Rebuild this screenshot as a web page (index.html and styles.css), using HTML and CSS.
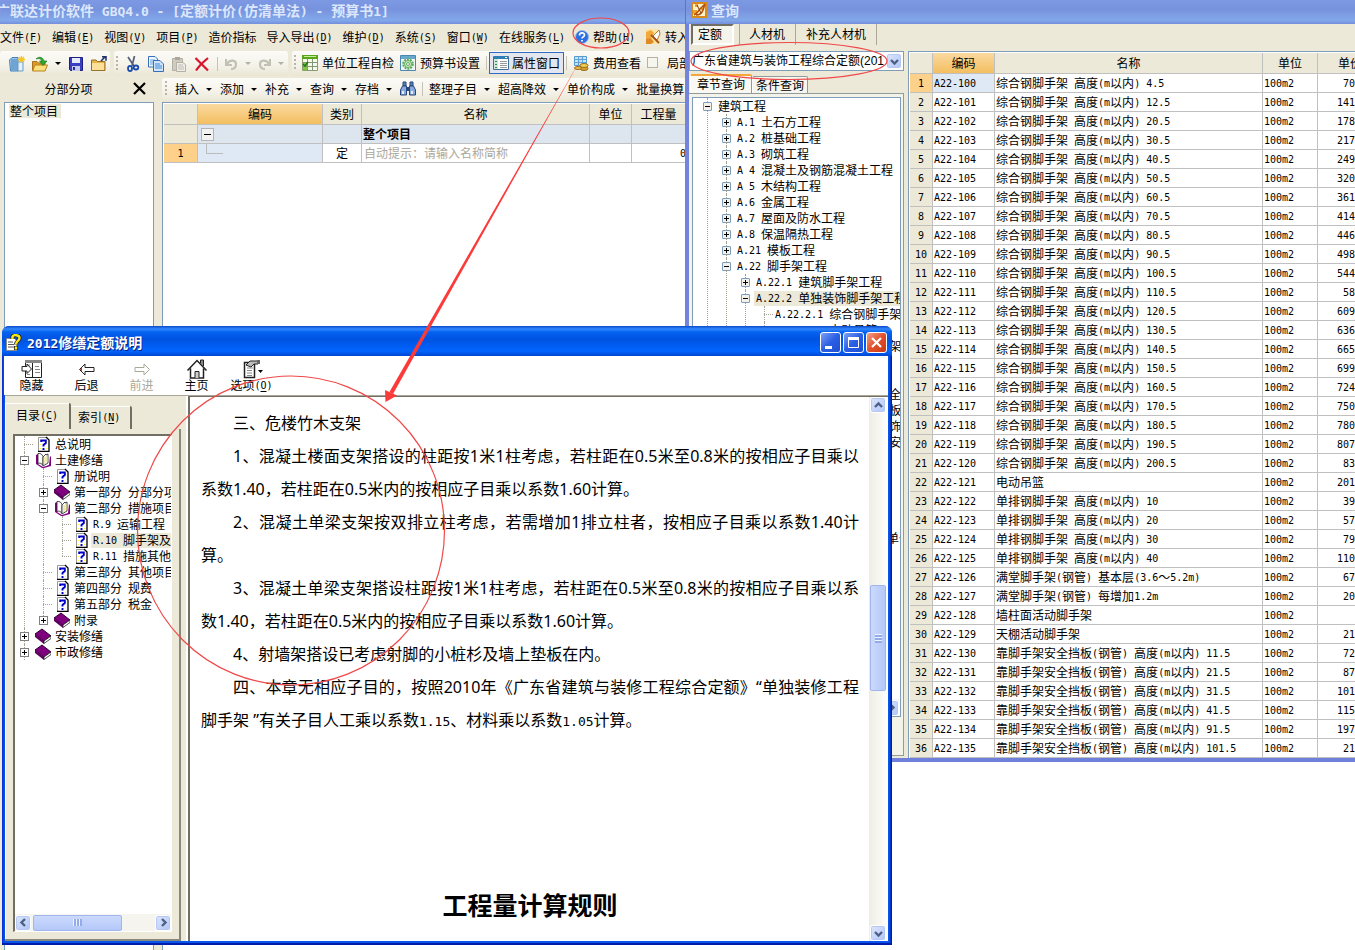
FILE: index.html
```html
<!DOCTYPE html>
<html lang="zh-CN">
<head>
<meta charset="utf-8">
<title>广联达计价软件 GBQ4.0</title>
<link rel="stylesheet" href="styles.css">
</head>
<body>
<svg class="defs" width="0" height="0" aria-hidden="true">
  <symbol id="i-topic" viewBox="0 0 16 16"><path d="M3 1h8l3 3v11H3z" fill="#fff"/><path d="M3.500 15V1.500H11" fill="none" stroke="#999"/><path d="M11 1l3 3v11.500H3" fill="none" stroke="#000" stroke-width="1.300"/><path d="M5 4h1v1H5zM5 8h1v1H5zM11 6h1v1h-1zM5 12h1v1H5zM11 12h1v1h-1z" fill="#ff3"/><path d="M6.200 6V4.500h4.600v2.600L8.500 9v1.500M8.500 12v2" fill="none" stroke="#00c" stroke-width="1.900"/></symbol>
  <symbol id="i-book" viewBox="0 0 16 16"><path d="M0 6l7-5 9 7-7 5z" fill="#800080" stroke="#300030"/><path d="M0 6v3l9 7v-3z" fill="#600060"/><path d="M9 13l7-5v2.500L9 15.500z" fill="#fff" stroke="#222" stroke-width=".8"/></symbol>
  <symbol id="i-open" viewBox="0 0 16 16"><path d="M1 3l2-1v10l5 3 6-2 1-9 1 1v9l-7 2H7l-6-4z" fill="#800080"/><path d="M3 1.500c3-.5 4 1 5 3v9c-1-2-3-3-5-2z" fill="#fff" stroke="#222" stroke-width=".8"/><path d="M8 5l3-3v1l2-1v9l-5 3z" fill="#fff" stroke="#222" stroke-width=".8"/><path d="M10 5v7M12 4v6" stroke="#e0d860"/></symbol>
  <symbol id="i-chev" viewBox="0 0 9 9"><path d="M1 3l3.500 3.500L8 3" fill="none" stroke="#4d6185" stroke-width="2.400"/></symbol>
  <symbol id="i-query" viewBox="0 0 16 16"><path d="M0 0h16v16H0z" fill="#d98a1c"/><path d="M2 2h12v12H2z" fill="#fff3c9"/><path d="M4 2h3v3H4zM10 6h3v2h-3zM2 8h4v4H2z" fill="#f3a32c"/><path d="M3 13c3-1 4-4 6-6l5-5-2 6c-1 3-4 5-7 5" fill="none" stroke="#b5520c" stroke-width="1.600"/><path d="M6 3l4 8" stroke="#7b3a10"/></symbol>
  <symbol id="i-settings" viewBox="0 0 16 16"><path d="M.5.500h15v15H.500z" fill="#eef6f8" stroke="#4a86ae"/><path d="M1 1h14v3H1z" fill="#68a8cc"/><circle cx="8" cy="9" r="4.800" fill="none" stroke="#5da95a" stroke-width="2" stroke-dasharray="2 1"/><circle cx="8" cy="9" r="3.500" fill="#d6f0c8" stroke="#5da95a"/><circle cx="8" cy="9" r="1.500" fill="#fff" stroke="#5da95a"/></symbol>
</svg>

<main class="desktop">

<section class="main-win">
  <header class="xp-title main-title"><h1>广联达计价软件 GBQ4.0 - [定额计价(仿清单法) - 预算书1]</h1></header>
  <nav class="menubar">
    <button>文件(<u>F</u>)</button><button>编辑(<u>E</u>)</button><button>视图(<u>V</u>)</button><button>项目(<u>P</u>)</button><button>造价指标</button><button>导入导出(<u>D</u>)</button><button>维护(<u>D</u>)</button><button>系统(<u>S</u>)</button><button>窗口(<u>W</u>)</button><button>在线服务(<u>L</u>)</button>
    <button class="with-icon"><svg width="14" height="14" viewBox="0 0 14 14"><circle cx="7" cy="7" r="6.500" fill="#2c6fe0" stroke="#9db8e8"/><path d="M4.500 5.500c0-3.500 5-3.500 5-.5 0 2-2.500 1.800-2.500 3.500M7 10v1.600" fill="none" stroke="#fff" stroke-width="1.700"/></svg><span>帮助(<u>H</u>)</span></button>
    <button class="with-icon"><svg width="16" height="16" viewBox="0 0 16 16"><path d="M1 0h9l5 2v13H1z" fill="#fbe3a0"/><path d="M1 3l5-2 3 3-3 5-5 2z" fill="#f2a93a"/><path d="M8 7l6-6 1 4-3 6z" fill="#fff" stroke="#b9772a"/><path d="M1 10l5-1 3 4-3 2H1z" fill="#e08a24"/><path d="M6 6l8 8" stroke="#a8501a" stroke-width="1.800"/></svg><span>转入</span></button>
  </nav>

  <div class="toolbars">
    <div class="strip files">
      <button aria-label="新建"><svg width="16" height="16" viewBox="0 0 16 16"><path d="M.5 4L3 1.500h6V15H1.500z" fill="#9cc8ee" stroke="#4780b8"/><path d="M3 3v11M5 3v11M7 3v11" stroke="#2f6ea8" stroke-width=".8"/><path d="M9 6h5v9H9z" fill="#e4f1fc" stroke="#6b99c4"/><path d="M12.500 0v7M9 3.500h7M10 1l5 5M15 1l-5 5" stroke="#f3c51e" stroke-width="1.300"/></svg></button>
      <button aria-label="打开"><svg width="16" height="16" viewBox="0 0 16 16"><path d="M.5 14V5.500H5L6.500 7H13v7z" fill="#d9992c" stroke="#a8721b"/><path d="M3 9h12.500L13 15H.500z" fill="#fce07d" stroke="#b8831f"/><path d="M4 3c3-3 7-2 8 2h3l-4 4.500L7.500 5H10C9 2.500 6.500 2 4 3z" fill="#2bab2b" stroke="#157015" stroke-width=".6"/></svg></button>
      <i class="drop"></i>
      <button aria-label="保存"><svg width="16" height="16" viewBox="0 0 16 16"><path d="M1.500 1.500h13v13h-12l-1-1z" fill="#3a3fc0" stroke="#1d2080"/><path d="M4 2h8v5H4z" fill="#e8ecfa"/><path d="M4 10h8v5H4z" fill="#c6cbe8"/><path d="M5 11h2v3H5z" fill="#25289a"/></svg></button>
      <button aria-label="关闭文件"><svg width="16" height="16" viewBox="0 0 16 16"><path d="M.5 14.500V4H5l1.500 1.500H14v9z" fill="#e5b44b" stroke="#97702a"/><path d="M1 7h12v7H1z" fill="#fbe09a"/><path d="M10 5l4-4M11 .800h4v4" fill="none" stroke="#24356e" stroke-width="1.600"/></svg></button>
    </div>
    <div class="strip edit">
      <span class="grip"></span>
      <button aria-label="剪切"><svg width="16" height="16" viewBox="0 0 16 16"><path d="M3 1l6 9M9.500 0L7 10" stroke="#555f78" stroke-width="1.700"/><ellipse cx="5" cy="12.500" rx="2" ry="2.600" fill="none" stroke="#1749ae" stroke-width="1.800"/><ellipse cx="11" cy="11.500" rx="2.300" ry="2" fill="none" stroke="#1749ae" stroke-width="1.800"/></svg></button>
      <button aria-label="复制"><svg width="16" height="16" viewBox="0 0 16 16"><path d="M.5.500H7L9.500 3v8h-9z" fill="#eef5fe" stroke="#3770b8"/><path d="M2 4h5M2 6h4M2 8h4" stroke="#5aa0e0"/><path d="M5.500 4.500H12L15.500 8v7.500h-10z" fill="#cfe4fb" stroke="#3770b8"/><path d="M7 8h5M7 10h7M7 12h7" stroke="#3a8bdc"/></svg></button>
      <button aria-label="粘贴"><svg width="16" height="16" viewBox="0 0 16 16"><path d="M1.500 2.500h10v12h-10z" fill="#cfccbf" stroke="#b3b0a4"/><path d="M4 1h5v3H4z" fill="#aaa79a"/><path d="M5.500 6.500H12l2.500 2v7h-9z" fill="#f0eee5" stroke="#b3b0a4"/><path d="M7 9h5M7 11h6M7 13h6" stroke="#bbb"/></svg></button>
      <button aria-label="删除"><svg width="16" height="16" viewBox="0 0 16 16"><path d="M1.500 2L14 14.500M14 2C9 6 5 10 2 14.500" fill="none" stroke="#d8152c" stroke-width="2.200"/></svg></button>
      <span class="sep"></span>
      <button aria-label="撤销"><svg width="13" height="16" viewBox="0 0 13 16"><path d="M1 3v6h6M2 8c3-5 9-4 9 0 0 3-2 5-5 5" fill="none" stroke="#c3c0b4" stroke-width="2.200"/></svg></button>
      <i class="drop off"></i>
      <button aria-label="恢复"><svg width="13" height="16" viewBox="0 0 13 16"><path d="M12 3v6H6M11 8C8 3 2 4 2 8c0 3 2 5 5 5" fill="none" stroke="#c3c0b4" stroke-width="2.200"/></svg></button>
      <i class="drop off"></i>
    </div>
    <div class="strip tools">
      <span class="grip"></span>
      <button class="with-icon"><svg width="16" height="16" viewBox="0 0 16 16"><path d="M.5 1.500h15v14H.500z" fill="#f4fbe8" stroke="#8a9c6c"/><path d="M0 0h16v4H0z" fill="#58a61a"/><path d="M2 1.500h12" stroke="#c8ec98"/><path d="M0 7.500h16M0 11.500h16M5.500 4v12M10.500 4v12" stroke="#84957a"/><path d="M1 8h4v3H1zM1 12h4v3H1z" fill="#7fca3c"/><path d="M1 9l2 2 3-4" fill="none" stroke="#1d7a10" stroke-width="1.500"/></svg><span>单位工程自检</span></button>
      <button class="with-icon"><svg width="16" height="16"><use href="#i-settings"/></svg><span>预算书设置</span></button>
      <span class="sep"></span>
      <button class="with-icon pressed"><svg width="16" height="16" viewBox="0 0 16 16"><path d="M.5 1.500h15v13H.500z" fill="#fff" stroke="#3e6f97"/><path d="M1 1h14v3H1z" fill="#2e80b4"/><path d="M12 2h2v1h-2z" fill="#fff"/><path d="M1 4h4v10H1z" fill="#cfe6d8"/><path d="M2 6.500h2M2 9.500h2M2 12.500h2" stroke="#3a8c50"/><path d="M7 6.500h7M7 8.500h7M7 10.500h7M7 12.500h7" stroke="#999"/></svg><span>属性窗口</span></button>
      <span class="sep"></span>
      <button class="with-icon"><svg width="16" height="16" viewBox="0 0 16 16"><path d="M1.500 1.500h12v9h-12z" fill="#c8e4fa" stroke="#5799cf"/><path d="M1 4.500h13M1 7.500h13M5.500 1v10M9.500 1v10" stroke="#5aa4dc"/><ellipse cx="11" cy="13.500" rx="4" ry="2" fill="#d9a030" stroke="#966d18"/><ellipse cx="11" cy="10.500" rx="4" ry="2" fill="#f5cc55" stroke="#966d18"/><ellipse cx="5" cy="13" rx="3.500" ry="1.500" fill="#f0c14b" stroke="#966d18"/></svg><span>费用查看</span></button>
      <label class="check"><input type="checkbox"><span>局部汇总</span></label>
    </div>
  </div>

  <div class="work">
    <aside class="sections">
      <div class="pane-head"><h2>分部分项</h2><button aria-label="关闭"><svg width="13" height="13" viewBox="0 0 13 13"><path d="M1 1l11 11M12 1L1 12" stroke="#000" stroke-width="2.200"/></svg></button></div>
      <div class="pane-box"><span class="picked">整个项目</span></div>
    </aside>
    <div class="sheet">
      <div class="strip sheet-tools">
        <span class="grip"></span>
        <button class="dd">插入<i class="drop"></i></button><button class="dd">添加<i class="drop"></i></button><button class="dd">补充<i class="drop"></i></button><button class="dd">查询<i class="drop"></i></button><button class="dd">存档<i class="drop"></i></button>
        <button aria-label="查找"><svg width="16" height="16" viewBox="0 0 16 16"><path d="M3 1h3v4H3zM10 1h3v4h-3z" fill="#5b7fb8" stroke="#28467c"/><path d="M2.500 5h4v9h-6V9zM9.500 5h4l2 4v5h-6z" fill="#88aade" stroke="#28467c"/><path d="M6 6h4v4H6z" fill="#28467c"/><path d="M2 10h2v3H2zM11 10h2v3h-2z" fill="#e1ecfb"/></svg></button>
        <span class="sep"></span>
        <button class="dd">整理子目<i class="drop"></i></button><button class="dd">超高降效<i class="drop"></i></button><button class="dd">单价构成<i class="drop"></i></button><button class="dd">批量换算</button>
      </div>
      <div class="grid-box">
        <table class="grid budget">
          <colgroup><col class="b-no"><col class="b-code"><col class="b-kind"><col class="b-name"><col class="b-unit"><col></colgroup>
          <thead><tr><th></th><th class="hot">编码</th><th>类别</th><th>名称</th><th>单位</th><th>工程量</th></tr></thead>
          <tbody>
            <tr class="group"><th></th><td><button class="fold" aria-label="折叠"></button></td><td></td><td><b>整个项目</b></td><td></td><td></td></tr>
            <tr><th class="now">1</th><td class="cur"><span class="elbow"></span></td><td class="mid">定</td><td class="hint">自动提示：请输入名称简称</td><td></td><td class="num">0</td></tr>
          </tbody>
        </table>
      </div>
    </div>
  </div>
</section>

<section class="query-win">
  <header class="xp-title query-title"><svg width="16" height="16"><use href="#i-query"/></svg><h1>查询</h1></header>
  <div class="query-body">
    <nav class="kinds"><button class="on">定额</button><button>人材机</button><button>补充人材机</button></nav>
    <div class="split">
      <div class="chooser">
        <div class="combo"><select aria-label="定额库"><option>广东省建筑与装饰工程综合定额(201</option></select><span class="xp-btn"><svg width="9" height="9"><use href="#i-chev"/></svg></span></div>
        <div class="tabs"><button class="on">章节查询</button><button>条件查询</button></div>
        <div class="tab-page">
          <div class="tree-box">
            <ul class="tree">
              <li><div class="row"><button class="tg minus"></button><span class="lb">建筑工程</span></div>
                <ul>
                  <li><div class="row"><button class="tg"></button><span class="lb">A.1 土石方工程</span></div></li>
                  <li><div class="row"><button class="tg"></button><span class="lb">A.2 桩基础工程</span></div></li>
                  <li><div class="row"><button class="tg"></button><span class="lb">A.3 砌筑工程</span></div></li>
                  <li><div class="row"><button class="tg"></button><span class="lb">A 4 混凝土及钢筋混凝土工程</span></div></li>
                  <li><div class="row"><button class="tg"></button><span class="lb">A 5 木结构工程</span></div></li>
                  <li><div class="row"><button class="tg"></button><span class="lb">A.6 金属工程</span></div></li>
                  <li><div class="row"><button class="tg"></button><span class="lb">A.7 屋面及防水工程</span></div></li>
                  <li><div class="row"><button class="tg"></button><span class="lb">A.8 保温隔热工程</span></div></li>
                  <li><div class="row"><button class="tg"></button><span class="lb">A.21 模板工程</span></div></li>
                  <li><div class="row"><button class="tg minus"></button><span class="lb">A.22 脚手架工程</span></div>
                    <ul>
                      <li><div class="row"><button class="tg"></button><span class="lb">A.22.1 建筑脚手架工程</span></div></li>
                      <li><div class="row"><button class="tg minus"></button><span class="lb sel">A.22.2 单独装饰脚手架工程</span></div>
                        <ul>
                          <li><div class="row"><i class="leaf"></i><span class="lb">A.22.2.1 综合钢脚手架</span></div></li>
                          <li><div class="row"><i class="leaf"></i><span class="lb">A.22.2.2 电动吊篮</span></div></li>
                          <li><div class="row"><i class="leaf"></i><span class="lb">A.22.2.3 单排钢脚手架</span></div></li>
                          <li><div class="row"><i class="leaf"></i><span class="lb">A.22.2.4 满堂脚手</span></div></li>
                          <li><div class="row"><i class="leaf"></i><span class="lb">A.22.2.5 活动脚手</span></div></li>
                          <li><div class="row"><i class="leaf"></i><span class="lb">A.22.2.6 钢脚手架安全</span></div></li>
                          <li><div class="row"><i class="leaf"></i><span class="lb">A.22.2.7 安全防护挡板</span></div></li>
                          <li><div class="row"><i class="leaf"></i><span class="lb">A.22.2.8 单独建筑装饰</span></div></li>
                          <li><div class="row"><i class="leaf"></i><span class="lb">A.22.2.9 靠钢脚手架安</span></div></li>
                        </ul></li>
                      <li><div class="row"><button class="tg"></button><span class="lb">A.22.3 措施</span></div></li>
                    </ul></li>
                  <li><div class="row"><button class="tg"></button><span class="lb">A.23 垂直运输</span></div></li>
                  <li><div class="row"><button class="tg"></button><span class="lb">A.24 运输</span></div></li>
                  <li><div class="row"><button class="tg"></button><span class="lb">A.25 围护</span></div></li>
                  <li><div class="row"><button class="tg"></button><span class="lb">A.26 排水</span></div></li>
                  <li><div class="row"><button class="tg"></button><span class="lb">A.27 建筑工程措施其他项目单价</span></div></li>
                </ul></li>
            </ul>
            <div class="hbar"><button class="xp-btn left" aria-label="向左"><svg width="9" height="9"><use href="#i-chev"/></svg></button><button class="xp-btn right" aria-label="向右"><svg width="9" height="9"><use href="#i-chev"/></svg></button></div>
          </div>
        </div>
      </div>
      <div class="results">
        <table class="grid quota">
          <colgroup><col class="q-no"><col class="q-code"><col><col class="q-unit"><col class="q-price"></colgroup>
          <thead><tr><th></th><th class="hot">编码</th><th>名称</th><th>单位</th><th class="cut">单价</th></tr></thead>
          <tbody id="quota-rows"></tbody>
        </table>
      </div>
    </div>
  </div>
</section>

<section class="help-win">
  <header class="help-title">
    <svg width="16" height="17" viewBox="0 0 16 17"><path d="M.5 4.500h8l2 2v10H.500z" fill="#fff" stroke="#888"/><path d="M2 8h5M2 10.500h6M2 13h6" stroke="#555"/><path d="M6.500 5V2.500c1-2 7-2 7 1.500 0 3-3.500 3-3.500 6.500M10 12v4" fill="none" stroke="#222" stroke-width="4"/><path d="M6.500 5V2.500c1-2 7-2 7 1.500 0 3-3.500 3-3.500 6.500M10 12.500v3" fill="none" stroke="#ffe81a" stroke-width="2.400"/></svg>
    <h1>2012修缮定额说明</h1>
    <div class="caps">
      <button aria-label="最小化"><svg width="19" height="19" viewBox="0 0 19 19"><path d="M4 13h7v3H4z" fill="#fff"/></svg></button>
      <button aria-label="最大化"><svg width="19" height="19" viewBox="0 0 19 19"><path d="M4.500 5.500h10v9h-10z" fill="none" stroke="#fff"/><path d="M4 4h11v3H4z" fill="#fff"/></svg></button>
      <button class="close" aria-label="关闭"><svg width="19" height="19" viewBox="0 0 19 19"><path d="M5 5l9 9M14 5l-9 9" stroke="#fff" stroke-width="2.200"/></svg></button>
    </div>
  </header>
  <div class="help-body">
    <nav class="help-tools">
      <button><svg width="22" height="20" viewBox="0 0 22 20"><path d="M4.500 1.500h16v17h-16z" fill="#fff" stroke="#222"/><path d="M4 1h17v3H4z" fill="#888"/><path d="M11.500 4v15" stroke="#222"/><path d="M14 7.500h4M14 10.500h5M14 13.500h5M6 15.500h3M6 6h3" stroke="#888"/><path d="M1 7.500h5V5l4.500 5L6 14.500V12H1z" fill="#fff" stroke="#222"/></svg><span>隐藏</span></button>
      <button><svg width="22" height="20" viewBox="0 0 22 20"><path d="M3.500 10.500L9 5v3.500h9v4H9V16z" fill="#fff" stroke="#222"/><path d="M4 10.500l2-2v4z" fill="#b22"/></svg><span>后退</span></button>
      <button class="off" disabled><svg width="22" height="20" viewBox="0 0 22 20"><path d="M18.500 10.500L13 5v3.500H4v4h9V16z" fill="#fff" stroke="#aca899"/></svg><span>前进</span></button>
      <button><svg width="22" height="20" viewBox="0 0 22 20"><path d="M14.500 4V1h3v6" fill="#888" stroke="#222"/><path d="M1.500 11.500L11 1.500l9.500 10M4.500 9.500v9.500h13V9.500" fill="#fff" stroke="#222" stroke-width="1.500"/><path d="M9 19v-6.500h4V19" fill="#ccc" stroke="#222"/></svg><span>主页</span></button>
      <button><svg width="22" height="20" viewBox="0 0 22 20"><path d="M3.500 3.500h10v15h-10z" fill="#fff" stroke="#222" stroke-width="1.500"/><path d="M6 9h6M6 11.500h5M6 14h5M6 16.500h5" stroke="#888"/><path d="M5 6l4-4h8v3h-4l-3 3z" fill="#bbb" stroke="#222"/><path d="M16 1h3v4h-3z" fill="#666"/><path d="M17 11h5l-2.500 3z"/></svg><span>选项(<u>O</u>)</span></button>
    </nav>
    <div class="help-split">
      <aside class="help-nav">
        <div class="h-tabs"><button class="on">目录(<u>C</u>)</button><button>索引(<u>N</u>)</button></div>
        <div class="h-page">
          <div class="h-tree">
            <ul class="tree dotted">
              <li><div class="row"><i class="leaf"></i><svg width="16" height="16"><use href="#i-topic"/></svg><span class="lb">总说明</span></div></li>
              <li><div class="row"><button class="tg minus"></button><svg width="16" height="16"><use href="#i-open"/></svg><span class="lb">土建修缮</span></div>
                <ul>
                  <li><div class="row"><i class="leaf"></i><svg width="16" height="16"><use href="#i-topic"/></svg><span class="lb">册说明</span></div></li>
                  <li><div class="row"><button class="tg"></button><svg width="16" height="16"><use href="#i-book"/></svg><span class="lb">第一部分 分部分项工程</span></div></li>
                  <li><div class="row"><button class="tg minus"></button><svg width="16" height="16"><use href="#i-open"/></svg><span class="lb">第二部分 措施项目</span></div>
                    <ul>
                      <li><div class="row"><i class="leaf"></i><svg width="16" height="16"><use href="#i-topic"/></svg><span class="lb">R.9 运输工程</span></div></li>
                      <li><div class="row"><i class="leaf"></i><svg width="16" height="16"><use href="#i-topic"/></svg><span class="lb sel">R.10 脚手架及支架</span></div></li>
                      <li><div class="row"><i class="leaf"></i><svg width="16" height="16"><use href="#i-topic"/></svg><span class="lb">R.11 措施其他</span></div></li>
                    </ul></li>
                  <li><div class="row"><i class="leaf"></i><svg width="16" height="16"><use href="#i-topic"/></svg><span class="lb">第三部分 其他项目</span></div></li>
                  <li><div class="row"><i class="leaf"></i><svg width="16" height="16"><use href="#i-topic"/></svg><span class="lb">第四部分 规费</span></div></li>
                  <li><div class="row"><i class="leaf"></i><svg width="16" height="16"><use href="#i-topic"/></svg><span class="lb">第五部分 税金</span></div></li>
                  <li><div class="row"><button class="tg"></button><svg width="16" height="16"><use href="#i-book"/></svg><span class="lb">附录</span></div></li>
                </ul></li>
              <li><div class="row"><button class="tg"></button><svg width="16" height="16"><use href="#i-book"/></svg><span class="lb">安装修缮</span></div></li>
              <li><div class="row"><button class="tg"></button><svg width="16" height="16"><use href="#i-book"/></svg><span class="lb">市政修缮</span></div></li>
            </ul>
            <div class="hbar"><button class="xp-btn left" aria-label="向左"><svg width="9" height="9"><use href="#i-chev"/></svg></button><span class="thumb-h"></span><button class="xp-btn right" aria-label="向右"><svg width="9" height="9"><use href="#i-chev"/></svg></button></div>
          </div>
        </div>
      </aside>
      <div class="reader">
        <article class="doc">
          <p class="ind">二、本章脚手架工程按相关规定执行计算</p>
          <p class="ind">三、危楼竹木支架</p>
          <p class="ind full">1、混凝土楼面支架搭设的柱距按1米1柱考虑，若柱距在0.5米至0.8米的按相应子目乘以</p>
          <p>系数1.40，若柱距在0.5米内的按相应子目乘以系数1.60计算。</p>
          <p class="ind full">2、混凝土单梁支架按双排立柱考虑，若需增加1排立柱者，按相应子目乘以系数1.40计</p>
          <p>算。</p>
          <p class="ind full">3、混凝土单梁支架搭设柱距按1米1柱考虑，若柱距在0.5米至0.8米的按相应子目乘以系</p>
          <p>数1.40，若柱距在0.5米内的按相应子目乘以系数1.60计算。</p>
          <p class="ind">4、射墙架搭设已考虑射脚的小桩杉及墙上垫板在内。</p>
          <p class="ind full">四、本章无相应子目的，按照2010年《广东省建筑与装修工程综合定额》“单独装修工程</p>
          <p>脚手架 ”有关子目人工乘以系数<span class="mono">1.15</span>、材料乘以系数<span class="mono">1.05</span>计算。</p>
          <h2>工程量计算规则</h2>
        </article>
        <div class="vbar"><button class="xp-btn up" aria-label="向上"><svg width="9" height="9"><use href="#i-chev"/></svg></button><span class="track-top"></span><span class="thumb-v"></span><span class="track-end"></span><button class="xp-btn" aria-label="向下"><svg width="9" height="9"><use href="#i-chev"/></svg></button></div>
      </div>
    </div>
  </div>
</section>

<svg class="marks" width="900" height="720" viewBox="0 0 900 720" aria-hidden="true">
  <g fill="none" stroke="#f04848" stroke-width="1.200"><ellipse cx="601" cy="33" rx="28" ry="15"/><ellipse cx="789" cy="61" rx="98" ry="18.500"/><ellipse cx="291" cy="530.500" rx="153.500" ry="154.500"/></g>
  <path d="M586 50L393 394l-3.600-2z" fill="#fb3a3a"/>
  <path d="M385.500 402l-.5-12 12 5.500z" fill="#fb3a3a"/>
</svg>

</main>
<script src="app.js"></script>
</body>
</html>
```
FILE: styles.css
```css
* { box-sizing: border-box; }
html, body { height: 100%; }
body { margin: 0; background: #fff; color: #000; font: 12px/16px "Noto Sans CJK SC", sans-serif; overflow: hidden; }
h1, h2, p, ul { margin: 0; padding: 0; }
ul { list-style: none; }
button { font: inherit; color: inherit; margin: 0; padding: 0; border: 0; background: none; white-space: nowrap; }
svg { display: block; flex: none; }
.defs { position: absolute; }
.hw { font-family: "DejaVu Sans Mono", monospace; font-size: 10px; line-height: 1; white-space: pre; vertical-align: 1px; }
.desktop { position: relative; height: 100%; overflow: hidden; }

/* Main window */
.main-win { position: absolute; left: 0; top: 0; width: 686px; height: 100%; display: flex; flex-direction: column; background: #ece9d8; overflow: hidden; }
.xp-title { flex: none; display: flex; align-items: center; height: 24px; padding-bottom: 4px; background: linear-gradient(#7d99e3, #7893de 40%, #82a8ea 85%, #748ddb); color: #dce7fc; white-space: nowrap; }
.xp-title h1, .help-title h1 { font-size: 14px; line-height: 20px; font-weight: 700; }
.xp-title .hw, .help-title .hw { font-size: 13px; vertical-align: baseline; }
.main-title h1 { margin-left: -4px; }
.menubar { flex: none; display: flex; align-items: center; gap: 10px; height: 27px; padding-bottom: 2px; white-space: nowrap; }
.with-icon { display: flex; align-items: center; gap: 4px; }
.toolbars { flex: none; display: flex; gap: 4px; height: 25px; }
.strip { display: flex; align-items: center; background: linear-gradient(#fcfbf8, #f4f2e8 60%, #e9e6d4); border-radius: 3px; }
.files { gap: 7px; padding: 0 3px 0 9px; }
.edit { gap: 7px; padding: 0 4px 0 2px; }
.tools { flex: 1; gap: 6px; padding: 0 0 2px 2px; min-width: 0; overflow: hidden; }
.tools .pressed { height: 22px; margin: 0 -4px; padding: 0 3px; gap: 3px; border: 1px solid #316ac5; background: #e3e6ef; }
.grip { flex: none; width: 2px; height: 16px; background: repeating-linear-gradient(#b9b6a8 0 2px, transparent 2px 4px); }
.sep { flex: none; width: 1px; height: 14px; background: #c5c2b8; }
.drop { flex: none; display: block; border: solid transparent; border-width: 3px 3px 0; border-top-color: #000; width: 6px; height: 3px; }
.drop.off { border-top-color: #b3b0a4; }
.check { display: flex; align-items: center; gap: 9px; white-space: nowrap; }
.check input { appearance: none; width: 11px; height: 11px; margin: 0; border: 1px solid #b5b2a2; background: #f6f5ee; }
.work { flex: 1; display: flex; min-height: 0; padding: 2px 0 0 4px; gap: 8px; }
.sections { width: 150px; display: flex; flex-direction: column; }
.pane-head { flex: none; display: flex; align-items: center; height: 24px; padding: 0 8px 3px 0; }
.pane-head h2 { flex: 1; font-size: 12px; line-height: 16px; font-weight: 400; text-align: center; }
.pane-box { flex: 1; border: 1px solid #7f9db9; border-bottom: 0; background: #fff; padding: 0 4px; }
.picked { display: inline-block; background: #ece9d8; line-height: 14px; padding: 0 3px 0 1px; }
.sheet { flex: 1; min-width: 0; display: flex; flex-direction: column; }
.sheet-tools { flex: none; height: 24px; padding: 0 0 2px 3px; gap: 8px; }
.sheet-tools .dd { display: flex; align-items: center; gap: 7px; }
.sheet-tools .sep { margin: 0 -2px; }
.grid-box { flex: 1; border: solid #7f9db9; border-width: 1px 0 0 1px; background: #fff; padding: 1px 0 0 1px; overflow: hidden; }

/* Data grids */
.grid { table-layout: fixed; width: 100%; border-collapse: separate; border-spacing: 0; white-space: nowrap; line-height: 16px; }
.grid th, .grid td { height: 19px; padding: 0 1px; border: solid #c0c0c0; border-width: 0 1px 1px 0; overflow: hidden; font-weight: 400; text-align: left; }
.grid th { background: #ece9d8; text-align: center; padding: 0; }
.grid thead th { height: 21px; }
.grid .hot { background: linear-gradient(#fad9a0, #f3bf60); }
.grid .now { background: #fed18a; }
.grid .cur { background: #dfe9f6; }
.grid .mid { text-align: center; }
.grid .num { text-align: right; padding: 0; border-right: 0; }
.b-no { width: 34px; } .b-code { width: 125px; } .b-kind { width: 39px; } .b-name { width: 228px; } .b-unit { width: 42px; }
.budget .group td { background: #dde5ef; }
.budget .hint { color: #aca899; padding-left: 2px; }
.fold { display: block; width: 13px; height: 13px; margin-left: 2px; border: 1px solid #b4b4b4; background: linear-gradient(#000, #000) center / 7px 1px no-repeat #f2f2f0; }
.elbow { display: block; width: 17px; height: 10px; margin: 0 0 8px 7px; border: solid #bcbcbc; border-width: 0 0 1px 1px; }
.q-no { width: 23px; } .q-code { width: 62px; } .q-unit { width: 55px; } .q-price { width: 37px; }
.quota td { padding-left: 1px; }
.quota .cut { text-align: left; padding-left: 20px; border-right: 0; text-overflow: clip; }

/* Query window */
.query-win { position: absolute; left: 685px; right: 0; top: 0; height: 762px; display: flex; flex-direction: column; background: #ece9d8; border-bottom: 4px solid #6f80da; }
.query-title { gap: 4px; padding-left: 5px; border-left: 1px solid #5f74cf; }
.query-body { flex: 1; min-height: 0; display: flex; flex-direction: column; border-left: 4px solid #7484da; }
.kinds { flex: none; display: flex; height: 27px; padding: 0 0 6px 2px; }
.kinds button { border-right: 1px solid #aca899; padding: 0 10px 2px; }
.kinds .on { background: #f5f4ec; border: solid #fff; border-width: 2px; border-top-color: #716f64; border-left-color: #716f64; padding: 0 10px 2px 5px; margin-right: 5px; box-shadow: 5px 0 0 #ece9d8, 6px 0 0 #aca899; }
.split { flex: 1; min-height: 0; display: flex; gap: 4px; }
.chooser { flex: none; width: 215px; display: flex; flex-direction: column; padding-bottom: 2px; }
.combo { flex: none; display: flex; height: 20px; border: 1px solid #7f9db9; background: #fff; padding: 1px; }
.combo select { appearance: none; flex: 1; min-width: 0; border: 0; margin: 0; padding: 0 1px; background: #fff; font: 12px/16px "Liberation Sans", "Noto Sans CJK SC", sans-serif; color: #000; }
.xp-btn { flex: none; display: flex; align-items: center; justify-content: center; width: 16px; height: 16px; border: 1px solid #fff; border-radius: 3px; background: linear-gradient(135deg, #dbe5fe, #b2c6f8); box-shadow: inset 0 0 0 1px #b5c7f3; }
.left svg { transform: rotate(90deg); } .right svg { transform: rotate(-90deg); } .up svg { transform: rotate(180deg); }
.tabs { flex: none; display: flex; align-items: flex-end; height: 22px; padding: 3px 0 0 1px; }
.tabs button { height: 17px; padding: 0 3px; border: 1px solid #919b9c; border-left-color: #fff; border-bottom: 0; border-radius: 2px 2px 0 0; background: #f6f5ee; }
.tabs .on { height: 19px; padding: 0 6px 3px; border-top: 2px solid #f5a83a; background: #f9f8f3; }
.tab-page { flex: 1; min-height: 0; display: flex; padding: 3px 2px 38px 3px; border: solid #919b9c; border-width: 1px 1px 1px 0; background: #f4f3ea; }
.tree-box { flex: 1; min-width: 0; display: flex; flex-direction: column; justify-content: space-between; border: 1px solid #7f9db9; background: #fff; padding: 0 1px 0 10px; overflow: hidden; }
.hbar { flex: none; display: flex; align-items: center; height: 17px; background: #f5f4ee; }
.hbar .right { margin-left: auto; }
.results { flex: 1; min-width: 0; border: solid #7f9db9; border-width: 1px 0 0 1px; padding: 1px 0 0 1px; background: #fff; overflow: hidden; }

/* Trees */
.tree ul { margin-left: 19px; }
.tree li { position: relative; }
.tree li::before { content: ""; position: absolute; left: 4px; top: 0; bottom: 0; border-left: 1px dotted #a6a396; }
.tree ul > li:last-child::before { bottom: auto; height: 8px; }
.tree .row { position: relative; display: flex; align-items: center; height: 16px; white-space: nowrap; }
.tg { flex: none; width: 9px; height: 9px; margin-right: 4px; border: 1px solid #7b9ebd; border-radius: 1px; background: linear-gradient(#000, #000) center / 5px 1px no-repeat, linear-gradient(#000, #000) center / 1px 5px no-repeat, #f3f1ea; }
.tg.minus { background: linear-gradient(#000, #000) center / 5px 1px no-repeat, #f3f1ea; }
.leaf { flex: none; width: 9px; height: 1px; margin: 0 0 0 4px; border-top: 1px dotted #a6a396; }
.lb { padding: 0 2px 1px; line-height: 14px; }
.lb.sel { background: #ece9d8; }
.dotted .tg { margin-right: 6px; border-color: #808080; background-color: #fff; border-radius: 0; }
.dotted .leaf { margin-right: 2px; }
.dotted .lb { margin-left: 2px; }

/* Help window */
.help-win { position: absolute; left: 2px; top: 326px; width: 890px; height: 619px; display: flex; flex-direction: column; border-radius: 7px 7px 0 0; background: linear-gradient(90deg, #0a2fd0, #0855ee 3px, #0855ee 887px, #00138c); padding: 0 4px 4px 3px; box-shadow: inset 0 -2px 0 #001ca8; overflow: hidden; }
.help-title { flex: none; display: flex; align-items: center; gap: 5px; height: 30px; margin: 0 -4px 0 -3px; padding: 2px 5px 0 4px; background: linear-gradient(#0a48c8, #3388ff 3px, #0562f0 6px, #0053e1 13px, #0064ff 25px, #0046d0); color: #fff; text-shadow: 1px 1px #0a1f80; }
.caps { display: flex; gap: 2px; margin-left: auto; }
.caps button { width: 21px; height: 21px; border: 1px solid #fff; border-radius: 3px; background: linear-gradient(135deg, #7d9ff5, #2b5fe4 50%, #1e4fd0); }
.caps .close { background: linear-gradient(135deg, #f0a088, #e2502c 50%, #c73a14); }
.help-body { flex: 1; min-height: 0; display: flex; flex-direction: column; background: #ece9d8; }
.help-tools { flex: none; display: flex; height: 39px; background: #fff; padding-top: 3px; margin-left: -1px; }
.help-tools button { width: 55px; display: flex; flex-direction: column; align-items: center; }
.help-tools svg + span { line-height: 12px; }
.help-tools .off { color: #aca899; }
.help-split { flex: 1; min-height: 0; display: flex; border-top: 1px solid #aca899; }
.help-nav { flex: none; width: 180px; display: flex; flex-direction: column; padding: 7px 4px 0 0; }
.h-tabs { flex: none; display: flex; align-items: flex-end; height: 26px; }
.h-tabs button { height: 23px; border: solid #716f64; border-width: 0 2px 0 0; box-shadow: inset 0 1px #fff; padding: 0 10px 2px 7px; border-radius: 0 2px 0 0; }
.h-tabs .on { height: 26px; padding: 0 11px 3px; box-shadow: inset 1px 1px #fff; }
.h-page { flex: 1; min-height: 0; display: flex; padding: 5px 7px 7px 8px; border: solid #8a887c; border-width: 0 2px 2px 0; box-shadow: inset 1px 0 #fff; }
.h-tree { flex: 1; min-width: 0; display: flex; flex-direction: column; justify-content: space-between; border: solid #fff; border-width: 2px 1px 1px 2px; border-top-color: #716f64; border-left-color: #716f64; background: #fff; overflow: hidden; }
.h-tree .tree { padding-left: 5px; }
.thumb-h { width: 89px; height: 16px; margin-left: 2px; border: 1px solid #9fb5ec; border-radius: 2px; background: repeating-linear-gradient(90deg, #eef3ff 0 1px, #93abe8 1px 3px) center / 9px 7px no-repeat, linear-gradient(#cbd9fd, #b4c8f8); }
.reader { flex: 1; min-width: 0; display: flex; margin-left: 3px; border: solid #716f64; border-width: 1px 0 0 2px; background: #fff; box-shadow: -2px 0 #fff; }
.doc { flex: 1; min-width: 0; padding: 0 10px 0 11px; overflow: hidden; font: 16px/33px "Noto Sans", "Noto Sans CJK SC", sans-serif; }
.doc p { height: 33px; white-space: nowrap; }
.doc p:first-child { margin-top: -23px; line-height: 27px; padding-left: 64px; }
.doc .ind { padding-left: 32px; }
.doc .full { text-align: justify; text-align-last: justify; }
.doc .mono { font-family: "DejaVu Sans Mono", monospace; font-size: 13px; }
.doc h2 { margin-top: 152px; font-size: 25px; line-height: 33px; font-weight: 700; text-align: center; }
.vbar { flex: none; width: 18px; margin-right: 1px; display: flex; flex-direction: column; align-items: center; background: linear-gradient(90deg, #eeede5, #fefefb); }
.track-top { flex: 172 0 0; }
.thumb-v { flex: 104 0 0; width: 16px; border: 1px solid #9fb5ec; border-radius: 2px; background: repeating-linear-gradient(#eef3ff 0 1px, #93abe8 1px 3px) center / 7px 9px no-repeat, linear-gradient(90deg, #cbd9fd, #b4c8f8); }
.track-end { flex: 234 0 0; }

/* Red annotations over the windows */
.marks { position: absolute; left: 0; top: 0; pointer-events: none; }
```
FILE: app.js
```js
const scaffold = h => `综合钢脚手架 高度(m以内) ${h}`;
const names = [scaffold(4.5), scaffold(12.5)];
for (let h = 20.5; h <= 200.5; h += 10) names.push(scaffold(h));
names.push('电动吊篮');
[10, 20, 30, 40].forEach(h => names.push(`单排钢脚手架 高度(m以内) ${h}`));
names.push('满堂脚手架(钢管) 基本层(3.6～5.2m)', '满堂脚手架(钢管) 每增加1.2m', '墙柱面活动脚手架', '天棚活动脚手架');
[11.5, 21.5, 31.5, 41.5, 91.5, 101.5].forEach(h => names.push(`靠脚手架安全挡板(钢管) 高度(m以内) ${h}`));

const prices = [70, 141, 178, 217, 249, 320, 361, 414, 446, 498, 544, 58, 609, 636, 665, 699, 724, 750,
  780, 807, 83, 201, 39, 57, 79, 110, 67, 20, '', 21, 72, 87, 101, 115, 197, 21];

document.getElementById('quota-rows').innerHTML = names.map((name, i) =>
  `<tr><th class="${i ? '' : 'now'}">${i + 1}</th><td class="${i ? '' : 'cur'}">A22-${100 + i}</td>` +
  `<td>${name}</td><td>100m2</td><td class="num">${prices[i]}</td></tr>`).join('');

// Half-width characters get a monospaced face at half the CJK advance.
const scope = '.main-win, .query-win, .help-title, .help-tools, .help-nav';
document.querySelectorAll(scope).forEach(root => {
  const walker = document.createTreeWalker(root, NodeFilter.SHOW_TEXT);
  const nodes = [];
  while (walker.nextNode()) nodes.push(walker.currentNode);
  nodes.forEach(node => {
    const text = node.nodeValue;
    if (!text.trim() || !/[ -~]/.test(text) || node.parentNode.closest('option, svg')) return;
    const parts = document.createDocumentFragment();
    text.split(/([ -~]+)/).forEach(part => {
      if (!part) return;
      if (/^[ -~]/.test(part)) {
        const span = document.createElement('span');
        span.className = 'hw';
        span.textContent = part;
        parts.append(span);
      } else {
        parts.append(part);
      }
    });
    node.replaceWith(parts);
  });
});
```
